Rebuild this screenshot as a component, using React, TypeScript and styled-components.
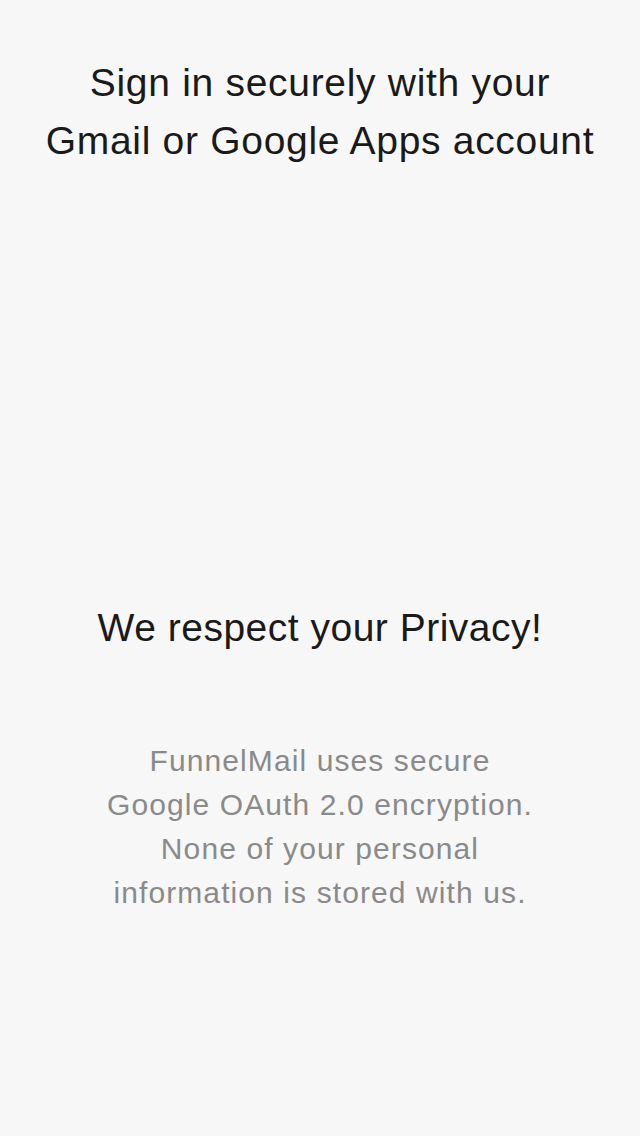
import React from "react";
import styled, { createGlobalStyle } from "styled-components";

const Global = createGlobalStyle`
  html, body { margin: 0; padding: 0; background: #f7f7f7; }
  body { font-family: "Liberation Sans", Arial, Helvetica, sans-serif; }
`;

const Screen = styled.main`
  width: 640px;
  min-height: 1136px;
  background: #f7f7f7;
  display: flex;
  flex-direction: column;
  align-items: center;
  padding-top: 54px;
  box-sizing: border-box;
`;

const Title = styled.h1`
  margin: 0;
  font-weight: 400;
  font-size: 39px;
  letter-spacing: 0.7px;
  line-height: 58px;
  color: #1a1a1a;
  text-align: center;
`;

const Heading = styled.h2`
  margin: 429px 0 0;
  font-weight: 400;
  font-size: 39px;
  letter-spacing: 0.5px;
  line-height: 58px;
  color: #1a1a1a;
  text-align: center;
`;

const Body = styled.p`
  margin: 82px 0 0;
  font-size: 30px;
  letter-spacing: 1.1px;
  line-height: 44px;
  color: #8a8a8a;
  text-align: center;
`;

export default function App() {
  return (
    <>
      <Global />
      <Screen>
        <Title>
          Sign in securely with your
          <br />
          Gmail or Google Apps account
        </Title>
        <Heading>We respect your Privacy!</Heading>
        <Body>
          FunnelMail uses secure
          <br />
          Google OAuth 2.0 encryption.
          <br />
          None of your personal
          <br />
          information is stored with us.
        </Body>
      </Screen>
    </>
  );
}
